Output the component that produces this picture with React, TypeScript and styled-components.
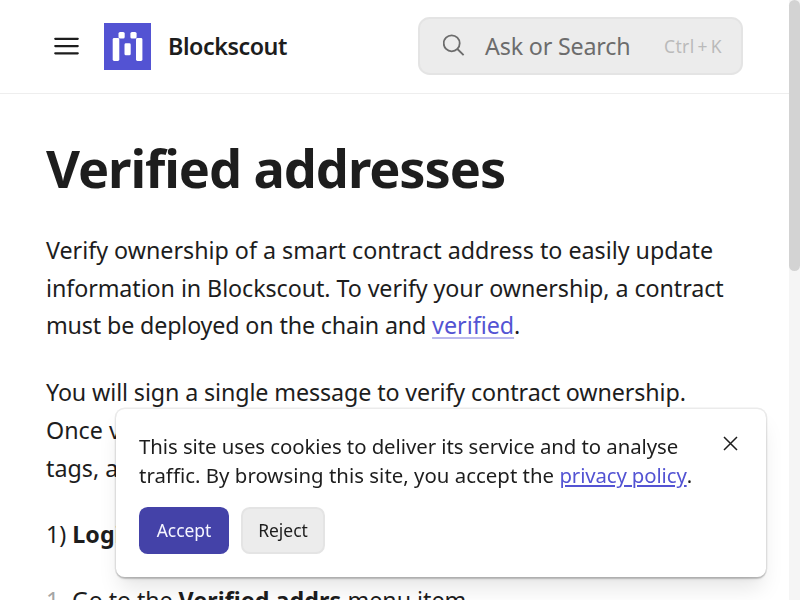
import React from "react";
import styled, { createGlobalStyle } from "styled-components";

const GlobalStyle = createGlobalStyle`
  * { box-sizing: border-box; }
  html, body { margin: 0; overflow: hidden; }
  body {
    background: #fff;
    color: #1d1d1d;
    font-family: "Noto Sans", sans-serif;
    font-size: 23.27px;
    line-height: 37.8px;
  }
  h1, p, ol { margin: 0; }
  button { font: inherit; color: inherit; padding: 0; margin: 0; border: 0; background: none; }
`;

const Viewport = styled.div`
  display: flex;
  width: 800px;
  height: 600px;
  overflow: hidden;
`;

const Page = styled.div`
  width: 789px;
  height: 600px;
  overflow: hidden;
`;

const ScrollTrack = styled.div`
  width: 11px;
  height: 600px;
  background: #f5f5f5;
`;

const ScrollThumb = styled.div`
  height: 271px;
  border-radius: 5.5px;
  background: #d3d3d3;
`;

const Header = styled.header`
  display: flex;
  align-items: center;
  height: 94px;
  padding: 0 46px 1px;
  border-bottom: 1px solid #eeeeee;
`;

const MenuButton = styled.button`
  display: flex;
  width: 40px;
  margin-right: 18px;
  padding-left: 8px;
`;

const Brand = styled.a`
  display: flex;
  align-items: center;
  gap: 17px;
  font-weight: 600;
  line-height: 29px;
  letter-spacing: -0.45px;
`;

const SearchBox = styled.div`
  display: flex;
  align-items: center;
  width: 325px;
  height: 58px;
  margin-left: auto;
  padding: 0 19px 0 23px;
  border: 2px solid #e4e4e4;
  border-radius: 11.6px;
  background: #ececec;
  color: #6c6c6c;
`;

const SearchLabel = styled.span`
  flex: 1;
  margin-left: 18px;
  padding-top: 2px;
  letter-spacing: -0.18px;
`;

const Shortcut = styled.kbd`
  display: flex;
  gap: 3px;
  padding-top: 2px;
  font-family: inherit;
  font-size: 17.45px;
  letter-spacing: 0.35px;
  color: #bababa;
`;

const Article = styled.main`
  padding: 41px 46px 0;
`;

const Title = styled.h1`
  font-size: 52.36px;
  line-height: 65.45px;
  font-weight: 700;
  letter-spacing: -1.07px;
  margin-bottom: 31.7px;
`;

const Paragraph = styled.p`
  margin-bottom: 29.5px;
  line-height: 37.6px;
  white-space: nowrap;
`;

const Line = styled.span<{ $tracking?: number }>`
  display: block;
  letter-spacing: ${(p) => p.$tracking ?? 0}px;
`;

const TextLink = styled.a`
  color: #5353d3;
  letter-spacing: 0;
  text-decoration: underline;
  text-decoration-color: #bab9ed;
  text-decoration-thickness: 2px;
  text-underline-offset: 3px;
  text-decoration-skip-ink: none;
`;

const SectionLead = styled(Paragraph)`
  margin-top: -0.8px;
`;

const StepList = styled.ol`
  margin-top: -0.7px;
  padding: 0;
  list-style: none;
`;

const Step = styled.li`
  display: flex;
  white-space: pre;
`;

const StepNumber = styled.span`
  width: 26px;
  color: #a5a5a5;
`;

const StepIntro = styled.span`
  letter-spacing: -0.1px;
`;

const StepTerm = styled.b`
  letter-spacing: 0.06px;
`;

const CookieDialog = styled.aside`
  position: fixed;
  left: 116px;
  top: 409px;
  width: 650px;
  height: 168px;
  padding: 23px;
  border-radius: 8.7px;
  background: #fff;
  box-shadow: 0 0 0 1.45px rgba(0, 0, 0, 0.08), 0 1.45px 1.5px rgba(0, 0, 0, 0.16),
    0 14.5px 22px -4.4px rgba(0, 0, 0, 0.1), 0 5.8px 8.7px -5.8px rgba(0, 0, 0, 0.1);
  font-size: 20.36px;
  line-height: 29.09px;
`;

const CookieText = styled.p`
  white-space: nowrap;
`;

const PolicyLink = styled.a`
  color: #5353d3;
  letter-spacing: -0.12px;
  text-decoration: underline;
  text-decoration-thickness: 2px;
  text-underline-offset: 2px;
`;

const CloseButton = styled.button`
  position: absolute;
  top: 27px;
  right: 28px;
  display: flex;
`;

const Actions = styled.div`
  display: flex;
  gap: 12px;
  margin-top: 17px;
`;

const ActionButton = styled.button<{ $primary?: boolean; $width: number }>`
  width: ${(p) => p.$width}px;
  height: 47px;
  border: ${(p) => (p.$primary ? "0" : "2px solid #e4e4e4")};
  border-radius: 8.7px;
  background: ${(p) => (p.$primary ? "#4442a8" : "#ececec")};
  color: ${(p) => (p.$primary ? "#f6f6ff" : "#1d1d1d")};
  font-size: 17.45px;
  line-height: 23.3px;
`;

const MenuIcon = () => (
  <svg width="25" height="20" viewBox="0 0 25 20" fill="none" stroke="#1d1d1d" strokeWidth="2.3" strokeLinecap="round">
    <path d="M1.3 2.8h22.4M1.3 10.1h22.4M1.3 17.3h22.4" />
  </svg>
);

const Logo = () => (
  <svg width="47" height="47" viewBox="0 0 47 47">
    <rect width="47" height="47" fill="#5353d3" />
    <g fill="#fff">
      <rect x="8.7" y="15" width="6.6" height="23" rx="1.4" />
      <rect x="14.5" y="9" width="6.2" height="6.6" rx="1.6" />
      <rect x="20.5" y="20.3" width="6.2" height="12" rx="1.4" />
      <rect x="26.4" y="9" width="6.2" height="6.6" rx="1.6" />
      <rect x="32" y="15" width="6.4" height="23" rx="1.4" />
    </g>
  </svg>
);

const SearchIcon = () => (
  <svg width="24" height="24" viewBox="0 0 24 24" fill="none" stroke="#6c6c6c" strokeWidth="1.8">
    <circle cx="8.7" cy="9.3" r="8" />
    <path d="M14.4 15L20.6 21.2" />
  </svg>
);

const CloseIcon = () => (
  <svg width="15" height="15" viewBox="0 0 15 15" fill="none" stroke="#1d1d1d" strokeWidth="1.5">
    <path d="M1 1l13 13M14 1L1 14" />
  </svg>
);

export default function App() {
  return (
    <Viewport>
      <GlobalStyle />
      <Page>
        <Header>
          <MenuButton aria-label="Open menu">
            <MenuIcon />
          </MenuButton>
          <Brand>
            <Logo />
            Blockscout
          </Brand>
          <SearchBox>
            <SearchIcon />
            <SearchLabel>Ask or Search</SearchLabel>
            <Shortcut>
              <span>Ctrl</span>
              <span>+</span>
              <span>K</span>
            </Shortcut>
          </SearchBox>
        </Header>
        <Article>
          <Title>Verified addresses</Title>
          <Paragraph>
            <Line $tracking={-0.01}>Verify ownership of a smart contract address to easily update</Line>
            <Line $tracking={-0.075}>information in Blockscout. To verify your ownership, a contract</Line>
            <Line $tracking={-0.15}>
              must be deployed on the chain and <TextLink>verified</TextLink>.
            </Line>
          </Paragraph>
          <Paragraph>
            <Line $tracking={-0.11}>You will sign a single message to verify contract ownership.</Line>
            <Line>Once verified</Line>
            <Line>tags, and more</Line>
          </Paragraph>
          <SectionLead>
            1) <b>Login</b>
          </SectionLead>
          <StepList>
            <Step>
              <StepNumber>1.</StepNumber>
              <StepIntro>Go to the </StepIntro>
              <StepTerm>Verified addrs</StepTerm> menu item.
            </Step>
          </StepList>
        </Article>
      </Page>
      <ScrollTrack>
        <ScrollThumb />
      </ScrollTrack>
      <CookieDialog>
        <CookieText>
          <Line $tracking={-0.06}>This site uses cookies to deliver its service and to analyse</Line>
          <Line $tracking={0.03}>
            traffic. By browsing this site, you accept the <PolicyLink>privacy policy</PolicyLink>.
          </Line>
        </CookieText>
        <CloseButton aria-label="Close">
          <CloseIcon />
        </CloseButton>
        <Actions>
          <ActionButton $primary $width={90}>Accept</ActionButton>
          <ActionButton $width={84}>Reject</ActionButton>
        </Actions>
      </CookieDialog>
    </Viewport>
  );
}
